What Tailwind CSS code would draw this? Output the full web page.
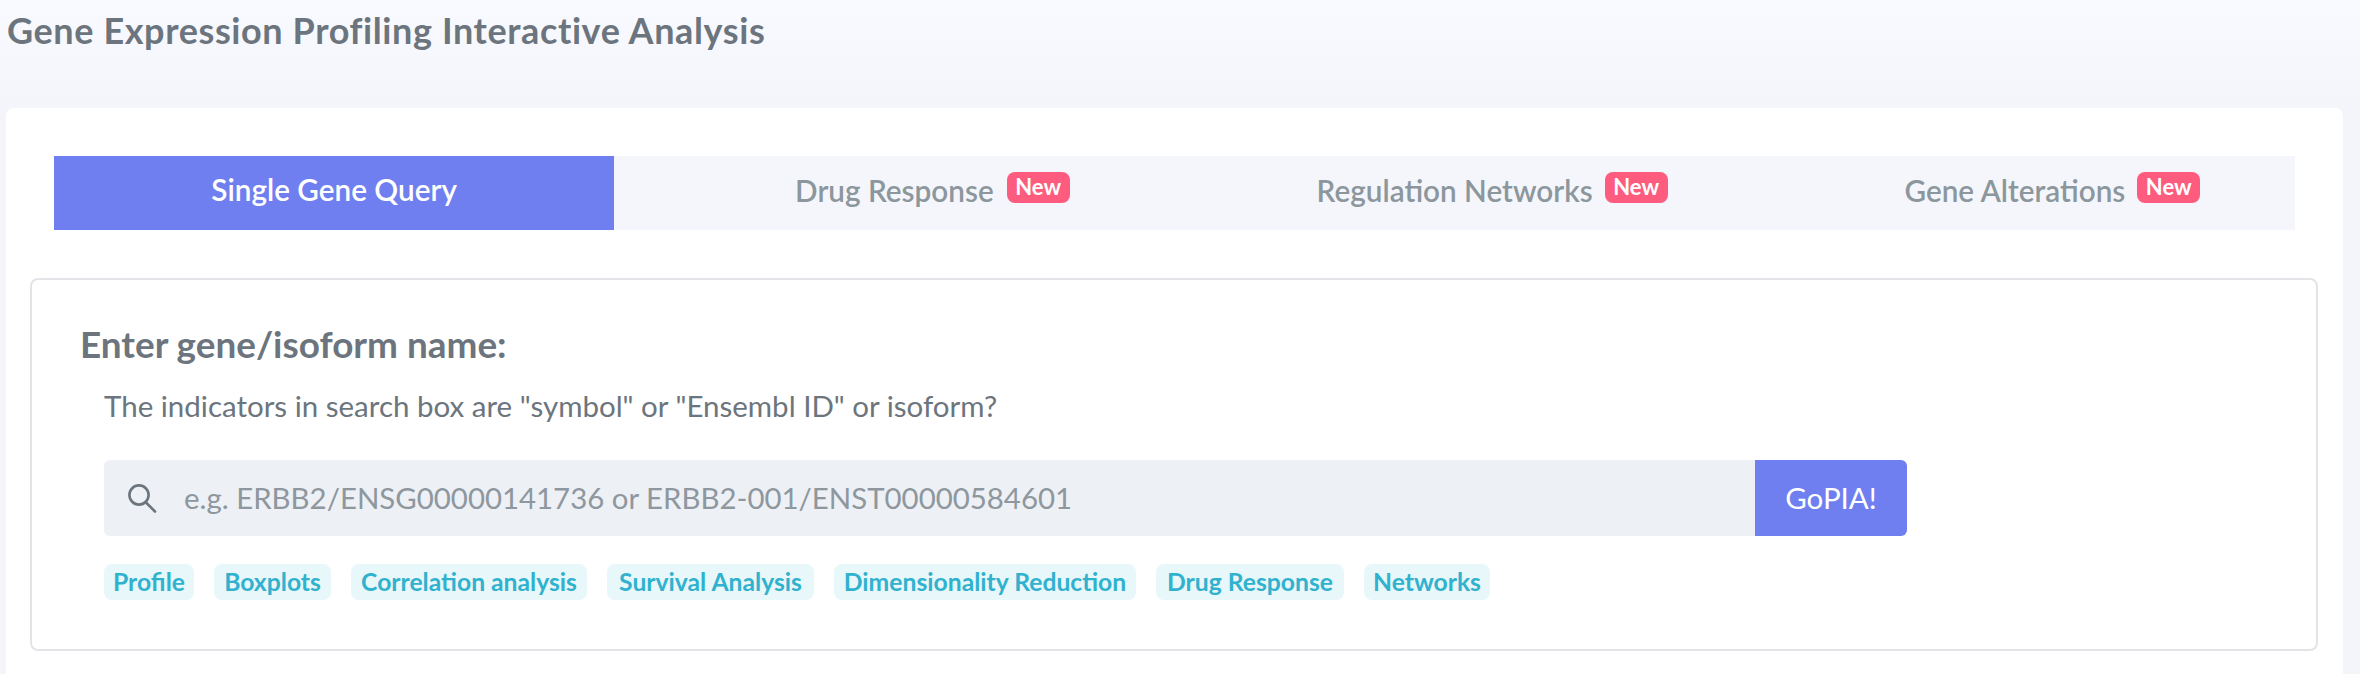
<!DOCTYPE html>
<html lang="en">
<head>
    <meta charset="UTF-8">
    <title>Gene Expression Profiling Interactive Analysis</title>
    <script src="https://cdn.jsdelivr.net/npm/@tailwindcss/browser@4"></script>
</head>
<body class="h-[674px] overflow-hidden bg-gradient-to-b from-[#f9faff] to-[#f3f5fa] to-[17%] font-['Lato','Noto_Sans',sans-serif]">
    <!-- Header -->
    <div class="h-[108px] pl-[7px] pt-[9px]">
        <h1 class="text-[36px] leading-[42px] font-bold tracking-[0.6px] text-[#6c757d]">Gene Expression Profiling Interactive Analysis</h1>
    </div>

    <!-- Main card -->
    <div class="ml-[6px] h-[566px] w-[2337px] rounded-t-lg bg-white pt-[48px]">
        <!-- Tabs -->
        <div class="mx-[48px] grid h-[74px] grid-cols-4 bg-[#f4f6fb] text-[29.7px] font-semibold text-[#8c979d]">
            <div class="flex items-center justify-center bg-[#6f7ff0] pb-[5px] text-white">Single Gene Query</div>
            <div class="flex items-center justify-center pb-[5px]"><span class="relative leading-[38px]">Drug Response<span class="absolute left-full top-[0px] ml-[13px] flex h-[31px] w-[63px] items-center justify-center rounded-lg bg-[#fd5c7e] text-[22px] font-bold leading-none text-white">New</span></span></div>
            <div class="flex items-center justify-center pb-[5px]"><span class="relative leading-[38px]">Regulation Networks<span class="absolute left-full top-[0px] ml-[12px] flex h-[31px] w-[63px] items-center justify-center rounded-lg bg-[#fd5c7e] text-[22px] font-bold leading-none text-white">New</span></span></div>
            <div class="flex items-center justify-center pb-[5px]"><span class="relative leading-[38px]">Gene Alterations<span class="absolute left-full top-[0px] ml-[12px] flex h-[31px] w-[63px] items-center justify-center rounded-lg bg-[#fd5c7e] text-[22px] font-bold leading-none text-white">New</span></span></div>
        </div>

        <!-- Search box -->
        <div class="ml-[24px] mt-[48px] h-[373px] w-[2288px] rounded-lg border-2 border-[#e3e4e7] pl-[50px] pt-[41px]">
            <h2 class="-ml-[2px] text-[36.9px] leading-[46px] font-bold text-[#6c757d]">Enter gene/isoform name:</h2>
            <p class="ml-[22px] mt-[20px] text-[29.5px] leading-[38px] text-[#6c757d]">The indicators in search box are "symbol" or "Ensembl ID" or isoform?</p>
            <div class="ml-[22px] mt-[35px] flex h-[76px] w-[1803px]">
                <div class="flex flex-1 items-center rounded-l-md bg-[#edf0f5] pl-[23px]">
                    <svg class="h-[30px] w-[30px] shrink-0" viewBox="0 0 30 30" fill="none" stroke="#6c757d" stroke-width="2.6" stroke-linecap="round">
                        <circle cx="12" cy="12" r="9.6"/>
                        <path d="M19 19.5 28 28.5"/>
                    </svg>
                    <input class="ml-[27px] w-full bg-transparent text-[29.4px] text-[#6c757d] outline-none placeholder:text-[#8e979e]" placeholder="e.g. ERBB2/ENSG00000141736 or ERBB2-001/ENST00000584601">
                </div>
                <button class="w-[152px] rounded-r-md bg-[#6f7ff0] text-[29.5px] text-white">GoPIA!</button>
            </div>
            <div class="ml-[22px] mt-[28px] flex gap-[20px] text-[24.7px] font-bold text-[#30b2cf]">
                <span class="flex h-[36px] w-[90px] items-center justify-center rounded-lg bg-[#e8f7f9]">Profile</span>
                <span class="flex h-[36px] w-[117px] items-center justify-center rounded-lg bg-[#e8f7f9]">Boxplots</span>
                <span class="flex h-[36px] w-[236px] items-center justify-center rounded-lg bg-[#e8f7f9]">Correlation analysis</span>
                <span class="flex h-[36px] w-[207px] items-center justify-center rounded-lg bg-[#e8f7f9]">Survival Analysis</span>
                <span class="flex h-[36px] w-[302px] items-center justify-center rounded-lg bg-[#e8f7f9]">Dimensionality Reduction</span>
                <span class="flex h-[36px] w-[188px] items-center justify-center rounded-lg bg-[#e8f7f9]">Drug Response</span>
                <span class="flex h-[36px] w-[126px] items-center justify-center rounded-lg bg-[#e8f7f9]">Networks</span>
            </div>
        </div>
    </div>
</body>
</html>
